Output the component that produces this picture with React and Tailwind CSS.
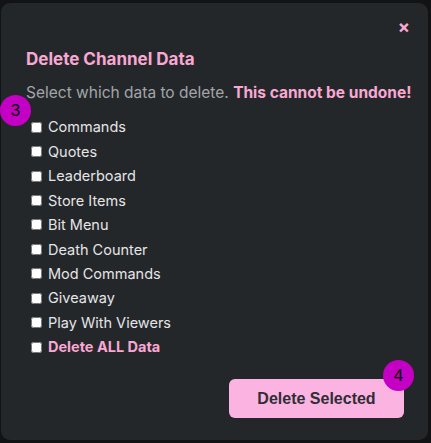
import React from 'react';

const items = [
    'Commands',
    'Quotes',
    'Leaderboard',
    'Store Items',
    'Bit Menu',
    'Death Counter',
    'Mod Commands',
    'Giveaway',
    'Play With Viewers',
];

function Badge({ n }) {
    return (
        <div className="absolute w-[31px] h-[31px] rounded-full bg-[#c400c4] flex items-center justify-center text-black text-[17px] font-['Liberation_Sans',sans-serif]">
            {n}
        </div>
    );
}

export default function App() {
    return (
        <div className="w-[431px] h-[443px] bg-[#121314] pt-[3px] pl-[1px] font-['Inter',sans-serif]">
            <div className="relative w-[427px] h-[437px] bg-[#24272a] rounded-[9px] px-[25px] pt-[17px]">
                <div className="flex justify-end h-[14px] mr-[-7px]">
                    <button className="text-[#f9a8d4] text-[18px] font-bold leading-none h-[14px] flex items-center">×</button>
                </div>

                <h2 className="mt-[15px] text-[17px] font-bold text-[#f9a8d4] leading-5">Delete Channel Data</h2>

                <p className="mt-[14px] text-[15.5px] text-[#a3a5a8] leading-5 whitespace-nowrap">
                    Select which data to delete. <span className="font-bold text-[#f9a8d4]">This cannot be undone!</span>
                </p>

                <div className="mt-[12px] flex flex-col">
                    {items.map(name => (
                        <label key={name} className="h-[24.45px] flex items-center gap-[6px] pl-[5px] text-[14.5px] text-[#e4e5e6]">
                            <input type="checkbox" className="w-[11px] h-[11px]" />
                            {name}
                        </label>
                    ))}
                    <label className="h-[24.45px] flex items-center gap-[6px] pl-[5px] text-[14.5px] font-bold text-[#f9a8d4]">
                        <input type="checkbox" className="w-[11px] h-[11px]" />
                        Delete ALL Data
                    </label>
                </div>

                <div className="flex justify-end mt-[20px]">
                    <button className="w-[175px] h-[39px] mr-[-1px] rounded-[6px] bg-[#fbb3e2] text-[#2e2e34] text-[16px] font-bold font-['Liberation_Sans',sans-serif]">
                        Delete Selected
                    </button>
                </div>

                <div className="absolute left-[-1px] top-[92px]"><Badge n="3" /></div>
                <div className="absolute left-[382px] top-[357px]"><Badge n="4" /></div>
            </div>
        </div>
    );
}
